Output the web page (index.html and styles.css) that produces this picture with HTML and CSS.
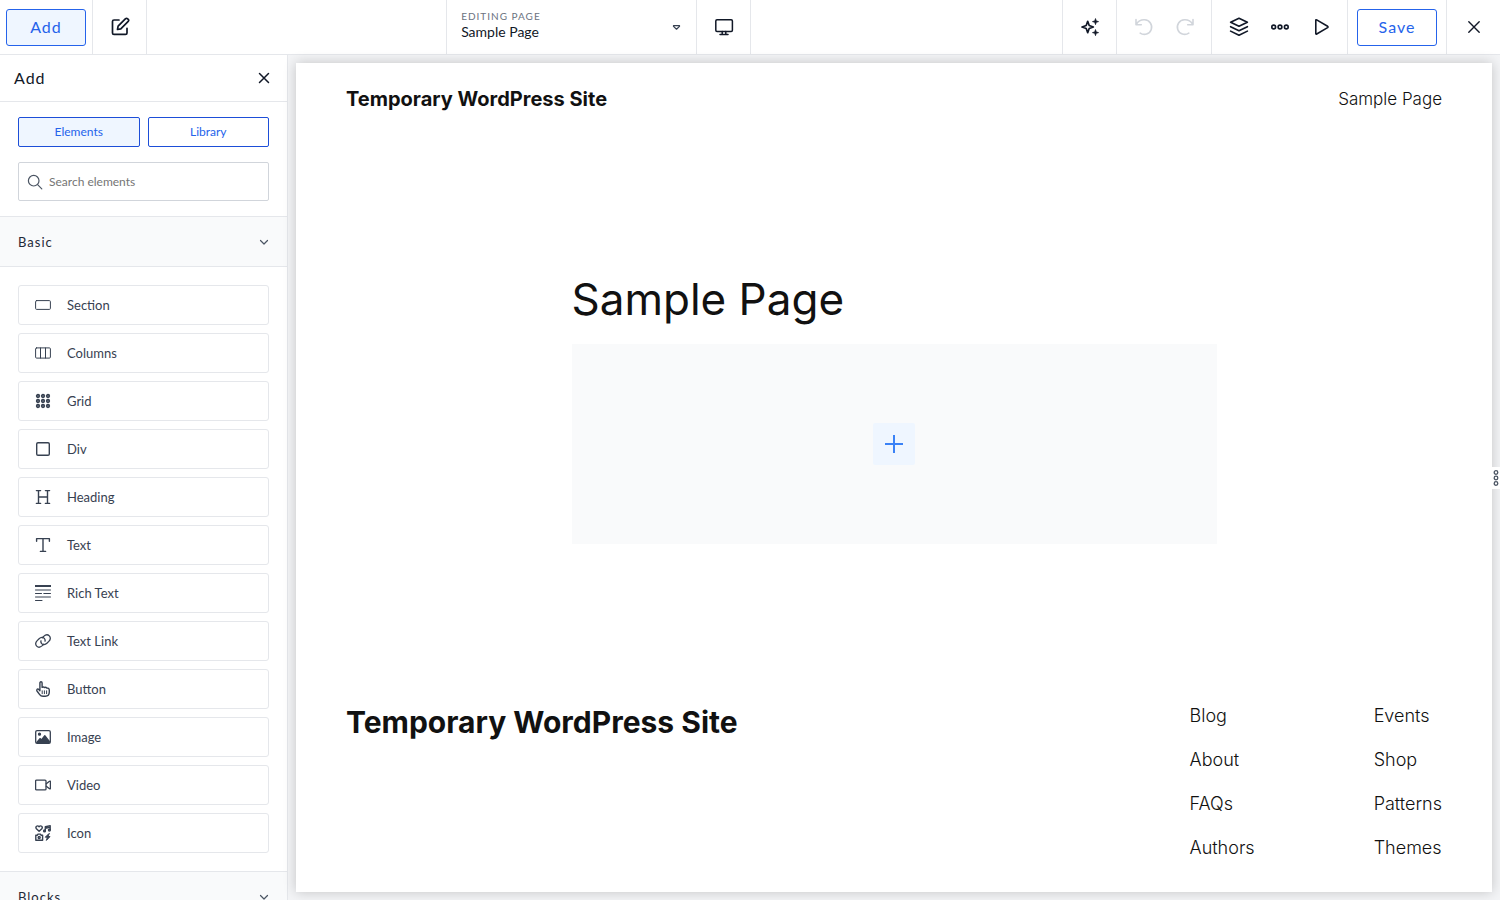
FILE: index.html
```html
<!DOCTYPE html>
<html lang="en">
<head>
    <meta charset="UTF-8">
    <meta name="viewport" content="width=device-width, initial-scale=1.0">
    <title>Editing Sample Page</title>
    <link rel="stylesheet" href="styles.css">
</head>
<body>

    <!-- Top toolbar -->
    <header class="topbar">
        <div class="topbar-group">
            <div class="cell cell-add">
                <button class="button button-active">Add</button>
            </div>
            <div class="cell">
                <button class="icon-button" aria-label="Edit page">
                    <svg width="20" height="20" viewBox="0 0 20 20" fill="none" stroke="currentColor" stroke-width="1.7" stroke-linecap="round" stroke-linejoin="round">
                        <path d="M9 3H4Q2.5 3 2.5 4.5V15.9Q2.5 17.4 4 17.4H15.5Q17 17.4 17 15.9V11.3"/>
                        <path d="M7.5 12.5L8.1 9.2L15.6 1.7Q16.6 .8 17.7 1.8L18.2 2.3Q19.2 3.3 18.2 4.4L10.8 11.8L7.5 12.5Z"/>
                    </svg>
                </button>
            </div>
        </div>

        <div class="topbar-group topbar-center">
            <button class="page-picker" aria-haspopup="listbox">
                <span class="page-picker-text">
                    <span class="page-picker-label">Editing page</span>
                    <span class="page-picker-name">Sample Page</span>
                </span>
                <svg width="9" height="7" viewBox="0 0 9 7" fill="none" stroke="#374151" stroke-width="1.2" stroke-linejoin="round"><path d="M1.5 1.6H7.5V2.4L4.5 5.2L1.5 2.4Z"/></svg>
            </button>
            <div class="cell">
                <button class="icon-button" aria-label="Desktop view">
                    <svg width="20" height="20" viewBox="0 0 20 20" fill="none" stroke="currentColor" stroke-width="1.5" stroke-linecap="round" stroke-linejoin="round">
                        <rect x="1.8" y="2.8" width="16.6" height="11.6" rx="1.2"/>
                        <path d="M8.2 14.5V17.4M11.8 14.5V17.4M6 17.5H14"/>
                    </svg>
                </button>
            </div>
        </div>

        <div class="topbar-group topbar-right">
            <div class="cell">
                <button class="icon-button" aria-label="AI tools">
                    <svg width="20" height="20" viewBox="0 0 20 20" fill="none" stroke="currentColor" stroke-width="1.7" stroke-linejoin="round">
                        <path d="M7.7 4.3L9.2 8.5L13.4 10L9.2 11.5L7.7 15.7L6.2 11.5L2 10L6.2 8.5Z"/>
                        <path fill="currentColor" stroke-width=".8" d="M15.5 1.6L16.2 3.9L18.5 4.6L16.2 5.3L15.5 7.6L14.8 5.3L12.5 4.6L14.8 3.9ZM15.5 12.6L16.2 14.9L18.5 15.6L16.2 16.3L15.5 18.6L14.8 16.3L12.5 15.6L14.8 14.9Z"/>
                    </svg>
                </button>
            </div>
            <div class="cell">
                <button class="icon-button" aria-label="Undo" disabled>
                    <svg width="20" height="20" viewBox="0 0 20 20" fill="none" stroke="currentColor" stroke-width="1.6" stroke-linecap="round" stroke-linejoin="round">
                        <path d="M2 2.5V7.7H7.3M2.3 7.3C4.3 3.9 7.5 2.6 10.7 2.8A7.3 7.3 0 1 1 6.2 16.1"/>
                    </svg>
                </button>
                <button class="icon-button" aria-label="Redo" disabled>
                    <svg width="20" height="20" viewBox="0 0 20 20" fill="none" stroke="currentColor" stroke-width="1.6" stroke-linecap="round" stroke-linejoin="round">
                        <path d="M18 2.5V7.7H12.7M17.7 7.3C15.7 3.9 12.5 2.6 9.3 2.8A7.3 7.3 0 1 0 13.8 16.1"/>
                    </svg>
                </button>
            </div>
            <div class="cell">
                <button class="icon-button" aria-label="Layers">
                    <svg width="20" height="20" viewBox="0 0 20 20" fill="none" stroke="currentColor" stroke-width="1.6" stroke-linecap="round" stroke-linejoin="round">
                        <path d="M10 1.3L18.4 5.2L10 9.2L1.6 5.2Z"/>
                        <path d="M1.6 9.7L10 13.7L18.4 9.7M1.6 14.1L10 18.3L18.4 14.1"/>
                    </svg>
                </button>
                <button class="icon-button" aria-label="More">
                    <svg width="20" height="20" viewBox="0 0 20 20" fill="none" stroke="currentColor" stroke-width="1.6">
                        <circle cx="3.7" cy="10" r="1.9"/><circle cx="10" cy="10" r="1.9"/><circle cx="16.3" cy="10" r="1.9"/>
                    </svg>
                </button>
                <button class="icon-button" aria-label="Preview">
                    <svg width="20" height="20" viewBox="0 0 20 20" fill="none" stroke="currentColor" stroke-width="1.6" stroke-linejoin="round">
                        <path d="M4.8 3.4Q4.8 2.4 5.7 2.9L16.6 9.3Q17.4 10 16.6 10.6L5.7 17Q4.8 17.5 4.8 16.5Z"/>
                    </svg>
                </button>
            </div>
            <div class="cell cell-save">
                <button class="button">Save</button>
            </div>
            <div class="cell">
                <button class="icon-button" aria-label="Close editor">
                    <svg width="20" height="20" viewBox="0 0 20 20" fill="none" stroke="currentColor" stroke-width="1.4" stroke-linecap="round"><path d="M4.8 4.8L15.2 15.2M15.2 4.8L4.8 15.2"/></svg>
                </button>
            </div>
        </div>
    </header>

    <div class="workspace">

        <!-- Elements panel -->
        <aside class="sidebar">
            <div class="sidebar-header">
                <h2>Add</h2>
                <button class="close-button" aria-label="Close panel">
                    <svg width="14" height="14" viewBox="0 0 14 14" fill="none" stroke="currentColor" stroke-width="1.5" stroke-linecap="round"><path d="M2.5 2.5L11.5 11.5M11.5 2.5L2.5 11.5"/></svg>
                </button>
            </div>

            <div class="sidebar-tools">
                <div class="tabs">
                    <button class="tab tab-active">Elements</button>
                    <button class="tab">Library</button>
                </div>
                <label class="search">
                    <svg width="16" height="16" viewBox="0 0 16 16" fill="none" stroke="currentColor" stroke-width="1.2" stroke-linecap="round"><circle cx="6.7" cy="6.7" r="5.3"/><path d="M10.6 10.6L14.8 14.8"/></svg>
                    <input type="text" placeholder="Search elements" aria-label="Search elements">
                </label>
            </div>

            <button class="section-toggle">
                Basic
                <svg width="10" height="6" viewBox="0 0 10 6" fill="none" stroke="#4b5563" stroke-width="1.2" stroke-linecap="round" stroke-linejoin="round"><path d="M1.5 1.5L5 5L8.5 1.5"/></svg>
            </button>

            <div class="element-list">
                <button class="element">
                    <svg viewBox="0 0 16 16"><rect x=".6" y="3.6" width="14.8" height="8.8" rx="1"/></svg>
                    Section
                </button>
                <button class="element">
                    <svg viewBox="0 0 16 16"><rect x=".6" y="2.9" width="14.8" height="10.2" rx="1"/><path d="M5.5 3V13M10.5 3V13"/></svg>
                    Columns
                </button>
                <button class="element">
                    <svg viewBox="0 0 16 16" stroke-width="1.7">
                        <circle cx="3" cy="3" r="1.3"/><circle cx="8" cy="3" r="1.3"/><circle cx="13" cy="3" r="1.3"/>
                        <circle cx="3" cy="8" r="1.3"/><circle cx="8" cy="8" r="1.3"/><circle cx="13" cy="8" r="1.3"/>
                        <circle cx="3" cy="13" r="1.3"/><circle cx="8" cy="13" r="1.3"/><circle cx="13" cy="13" r="1.3"/>
                    </svg>
                    Grid
                </button>
                <button class="element">
                    <svg viewBox="0 0 16 16" stroke-width="1.4"><rect x="1.7" y="1.7" width="12.6" height="12.6" rx="1.3"/></svg>
                    Div
                </button>
                <button class="element">
                    <svg viewBox="0 0 16 16" stroke-width="1.4"><path d="M1.4 1.6H5.6M10.4 1.6H14.6M1.4 14.4H5.6M10.4 14.4H14.6M3.5 1.6V14.4M12.5 1.6V14.4M3.5 8H12.5"/></svg>
                    Heading
                </button>
                <button class="element">
                    <svg viewBox="0 0 16 16" stroke-width="1.4"><path d="M1.6 4.2V1.6H14.4V4.2M8 1.6V14.4M5.4 14.4H10.6"/></svg>
                    Text
                </button>
                <button class="element">
                    <svg viewBox="0 0 16 16"><path stroke-width="2" d="M.5 1H15.5"/><path stroke-width="1" d="M.5 5H15.5M.5 8.5H6.5M8.8 8.5H15.5M.5 12H15.5M.5 15.5H7"/></svg>
                    Rich Text
                </button>
                <button class="element">
                    <svg viewBox="0 0 16 16" stroke-width="1.3">
                        <path d="M8.7 11.2L7.3 12.6C5.5 14.3 3.1 14.5 1.7 13.1C.2 11.6 .4 9.3 2.2 7.6L4.1 5.8C5.9 4.1 8 4 9.3 5.4C10 6.2 10.3 7.2 10 8.2"/>
                        <path d="M7.3 4.8L8.7 3.4C10.5 1.7 12.9 1.5 14.3 2.9C15.8 4.4 15.6 6.7 13.8 8.4L11.9 10.2C10.1 11.9 8 12 6.7 10.6C6 9.8 5.7 8.8 6 7.8"/>
                    </svg>
                    Text Link
                </button>
                <button class="element">
                    <svg viewBox="0 0 16 16" stroke-width="1.4"><path d="M4.9 9.8V2Q4.9 .8 6 .8T7.1 2V6.4Q8.4 5.5 9.5 6.5Q10.8 5.9 11.8 7Q14.3 6.9 14.3 9.2V11Q14.3 15.2 10.3 15.2H8Q5.8 15.2 4.7 13.6L2 10Q1.3 8.9 2.2 8.2Q3.1 7.7 3.9 8.6L4.9 9.8"/><path stroke-width="1" d="M7.2 9.8V12.7M9.4 9.8V12.7M11.6 9.8V12.7"/></svg>
                    Button
                </button>
                <button class="element">
                    <svg viewBox="0 0 16 16" stroke-width="1.3"><rect x=".7" y="1.7" width="14.6" height="12.6" rx="1.4"/><circle cx="4.5" cy="5.2" r="1" fill="currentColor"/><path fill="currentColor" d="M1.8 13.5L5 9.6L6.5 11L9.8 6.7L14.3 12.5V13.5Z"/></svg>
                    Image
                </button>
                <button class="element">
                    <svg viewBox="0 0 16 16" stroke-width="1.3"><rect x=".6" y="3.1" width="10.4" height="9.8" rx="1"/><path d="M11.3 6.8L14.5 4.3Q15.4 3.9 15.4 4.7V11.3Q15.4 12.1 14.5 11.7L11.3 9.2"/></svg>
                    Video
                </button>
                <button class="element">
                    <svg viewBox="0 0 16 16" stroke-width="1.4"><path d="M4.1 6.3L1.4 3.7C0 1.9 2.4-.2 4.1 1.7C5.8-.2 8.2 1.9 6.8 3.7Z"/><path d="M10.3 5.6V1.7L15.2.8V4.8M10.3 3.3L15.2 2.4"/><circle cx="9.5" cy="5.9" r=".9"/><circle cx="14.4" cy="5.1" r=".9"/><path d="M.8 10.3H2.2L3 9.1H5.4L6.2 10.3H7.6V15.2H.8Z"/><circle cx="4.2" cy="12.5" r="1"/><path fill="currentColor" stroke-width="1" d="M13.7 8.8L10.3 12.2H12.4L11.4 15.4L15 11.6H12.8L14.2 8.8Z"/></svg>
                    Icon
                </button>
            </div>

            <button class="section-toggle">
                Blocks
                <svg width="10" height="6" viewBox="0 0 10 6" fill="none" stroke="#4b5563" stroke-width="1.2" stroke-linecap="round" stroke-linejoin="round"><path d="M1.5 1.5L5 5L8.5 1.5"/></svg>
            </button>
        </aside>

        <!-- Page preview -->
        <main class="canvas">
            <div class="page">
                <div class="site-header">
                    <a href="#" class="site-title">Temporary WordPress Site</a>
                    <nav class="site-nav"><a href="#">Sample Page</a></nav>
                </div>

                <div class="page-content">
                    <h1>Sample Page</h1>
                    <div class="drop-zone">
                        <button class="drop-button" aria-label="Add element">
                            <svg width="18" height="18" viewBox="0 0 18 18" fill="none" stroke="currentColor" stroke-width="2"><path d="M9 0V18M0 9H18"/></svg>
                        </button>
                    </div>
                </div>

                <div class="site-footer">
                    <a href="#" class="footer-title">Temporary WordPress Site</a>
                    <nav class="footer-nav">
                        <div class="footer-column">
                            <a href="#">Blog</a>
                            <a href="#">About</a>
                            <a href="#">FAQs</a>
                            <a href="#">Authors</a>
                        </div>
                        <div class="footer-column">
                            <a href="#">Events</a>
                            <a href="#">Shop</a>
                            <a href="#">Patterns</a>
                            <a href="#">Themes</a>
                        </div>
                    </nav>
                </div>
            </div>
            <button class="resize-handle" aria-label="Resize canvas">
                <svg width="6" height="18" viewBox="0 0 6 18" fill="none" stroke="currentColor" stroke-width="1.3"><circle cx="3" cy="3.5" r="1.8"/><circle cx="3" cy="9" r="1.8"/><circle cx="3" cy="14.5" r="1.8"/></svg>
            </button>
        </main>
    </div>
</body>
</html>
```
FILE: styles.css
```css
* {
    box-sizing: border-box;
}

body {
    margin: 0;
    height: 100vh;
    display: flex;
    flex-direction: column;
    overflow: hidden;
    font-family: Lato, sans-serif;
    font-size: 14px;
    color: #111827;
    background-color: #fff;
}

button {
    font-family: inherit;
    color: inherit;
    padding: 0;
    border: none;
    background: none;
    cursor: pointer;
}

a {
    color: inherit;
    text-decoration: none;
}

svg {
    display: block;
    flex-shrink: 0;
}

/* Top toolbar */
.topbar {
    display: grid;
    grid-template-columns: 28fr auto 47fr;
    height: 55px;
    flex-shrink: 0;
    border-bottom: 1px solid #e5e7eb;
}

.topbar-group {
    display: flex;
}

.topbar-center {
    border-left: 1px solid #e5e7eb;
}

.topbar-right {
    justify-content: flex-end;
}

.topbar-right .cell {
    border-right: none;
    border-left: 1px solid #e5e7eb;
}

.cell {
    display: flex;
    align-items: center;
    gap: 14px;
    padding: 0 13px;
    border-right: 1px solid #e5e7eb;
}

.cell-add {
    padding: 0 6px;
}

.cell-save {
    padding: 0 9px;
}

.button {
    width: 80px;
    height: 37px;
    padding-bottom: 2px;
    border: 1px solid #2563eb;
    border-radius: 3px;
    font-size: 16px;
    letter-spacing: 1px;
    color: #2563eb;
}

.button-active {
    background-color: #eff6ff;
}

.icon-button {
    display: flex;
    align-items: center;
    justify-content: center;
    width: 27px;
    height: 27px;
}

.icon-button:disabled {
    color: #d1d5db;
    cursor: default;
}

.page-picker {
    display: flex;
    align-items: center;
    justify-content: space-between;
    width: 250px;
    padding: 0 15px 0 14px;
    border-right: 1px solid #e5e7eb;
    text-align: left;
}

.page-picker-text {
    display: flex;
    flex-direction: column;
    padding-bottom: 4px;
}

.page-picker-label {
    font-size: 10px;
    line-height: 14px;
    letter-spacing: 1px;
    text-transform: uppercase;
    color: #6b7280;
}

.page-picker-name {
    font-size: 14px;
    line-height: 18px;
}

/* Sidebar */
.workspace {
    display: flex;
    flex: 1;
    min-height: 0;
}

.sidebar {
    width: 288px;
    flex-shrink: 0;
    overflow: hidden;
    border-right: 1px solid #e5e7eb;
}

.sidebar-header {
    display: flex;
    align-items: center;
    justify-content: space-between;
    height: 47px;
    padding: 0 16px 0 14px;
    border-bottom: 1px solid #e5e7eb;
}

.sidebar-header h2 {
    margin: 0;
    padding-bottom: 2px;
    font-size: 16px;
    font-weight: 400;
    letter-spacing: 1px;
}

.sidebar-tools {
    padding: 15px 18px;
}

.tabs {
    display: flex;
    gap: 8px;
    margin-bottom: 15px;
}

.tab {
    flex: 1;
    height: 30px;
    padding-bottom: 2px;
    border: 1px solid #1d4ed8;
    border-radius: 2px;
    font-size: 12px;
    color: #2563eb;
}

.tab-active {
    background-color: #eff6ff;
}

.search {
    display: flex;
    align-items: center;
    gap: 6px;
    height: 39px;
    padding: 0 8px;
    border: 1px solid #d1d5db;
    border-radius: 2px;
    color: #4b5563;
}

.search input {
    flex: 1;
    min-width: 0;
    padding: 0;
    border: none;
    outline: none;
    font-family: inherit;
    font-size: 12px;
}

.search input::placeholder {
    color: #757575;
}

.section-toggle {
    display: flex;
    align-items: center;
    justify-content: space-between;
    width: 100%;
    height: 51px;
    padding: 0 18px;
    border-top: 1px solid #e5e7eb;
    border-bottom: 1px solid #e5e7eb;
    background-color: #f9fafb;
    font-size: 13px;
    letter-spacing: 1px;
    color: #1f2937;
}

.element-list {
    display: flex;
    flex-direction: column;
    gap: 8px;
    padding: 18px;
}

.element {
    display: flex;
    align-items: center;
    gap: 16px;
    height: 40px;
    padding: 0 16px;
    border: 1px solid #e5e7eb;
    border-radius: 3px;
    font-size: 13px;
    color: #374151;
}

.element svg {
    width: 16px;
    height: 16px;
    fill: none;
    stroke: currentColor;
    stroke-linecap: round;
    stroke-linejoin: round;
}

/* Page preview */
.canvas {
    position: relative;
    flex: 1;
    display: flex;
    padding: 8px;
    background-color: #f3f4f6;
}

.page {
    flex: 1;
    display: flex;
    flex-direction: column;
    padding: 0 50px;
    background-color: #fff;
    box-shadow: 0 0 12px rgba(0, 0, 0, 0.2);
    font-family: Inter, sans-serif;
    font-size: 18px;
    font-weight: 300;
    line-height: 28px;
    color: #111;
}

.site-header {
    display: flex;
    align-items: center;
    justify-content: space-between;
    height: 72px;
}

.site-title {
    font-size: 20px;
    font-weight: 700;
}

.site-nav {
    font-size: 17px;
}

.page-content {
    width: 100%;
    max-width: 645px;
    margin: 136px auto 0;
}

.page-content h1 {
    margin: 0 0 16px;
    font-size: 44px;
    font-weight: 400;
    line-height: 57px;
}

.drop-zone {
    display: flex;
    align-items: center;
    justify-content: center;
    height: 200px;
    background-color: #f9fafb;
}

.drop-button {
    display: flex;
    align-items: center;
    justify-content: center;
    width: 42px;
    height: 42px;
    border-radius: 2px;
    background-color: #eff6ff;
    color: #3b82f6;
}

.site-footer {
    display: flex;
    justify-content: space-between;
    margin-top: auto;
    padding-bottom: 30px;
}

.footer-title {
    font-size: 30px;
    font-weight: 700;
    line-height: 40px;
}

.footer-nav {
    display: flex;
    gap: 119px;
}

.footer-column {
    display: flex;
    flex-direction: column;
    gap: 16px;
}

/* Drag handle on the canvas edge */
.resize-handle {
    position: absolute;
    top: calc(50% - 11px);
    right: 0;
    display: flex;
    align-items: center;
    justify-content: center;
    width: 8px;
    height: 22px;
    background-color: #fff;
    color: #4b5563;
}
```
